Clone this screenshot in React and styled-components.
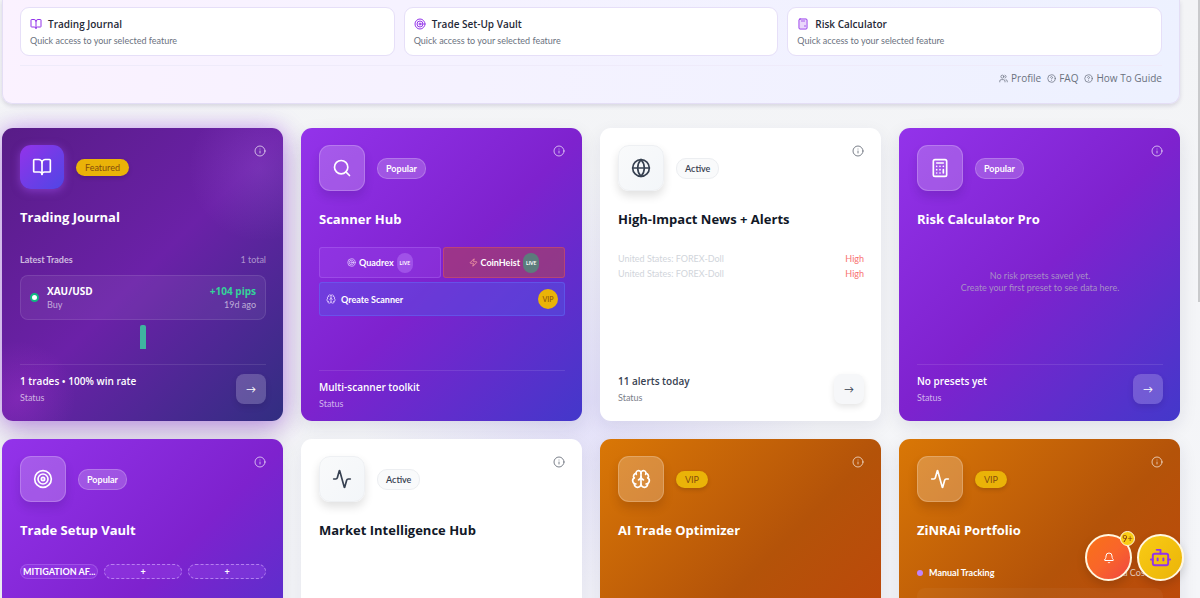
import React from 'react';
import styled, { createGlobalStyle, css } from 'styled-components';
import {
  Activity, Bell, BookOpen, Bot, Brain, Calculator, Globe, HelpCircle, Info, Search, Target, Users, Zap,
} from 'lucide-react';

const headingFont = '"Segoe UI", "Open Sans", "Noto Sans", sans-serif';

const GlobalStyle = createGlobalStyle`
  * {
    box-sizing: border-box;
  }
  body {
    margin: 0;
    font-family: "Segoe UI", Lato, "Open Sans", sans-serif;
    font-size: 9px;
    background: #f3f4f6;
  }
  button {
    font-family: inherit;
    cursor: pointer;
  }
  h2, p, ul {
    margin: 0;
    padding: 0;
  }
`;

const themes = {
  featured: {
    background: `radial-gradient(circle at 92% 14%, rgba(192, 132, 252, 0.16), transparent 20%),
      radial-gradient(circle at 6% 92%, rgba(217, 70, 239, 0.18), transparent 15%),
      linear-gradient(135deg, #581c87 0%, #6b21a8 50%, #312e81 100%)`,
    shadow: '0 0 22px rgba(168, 85, 247, 0.45), 0 12px 30px rgba(88, 28, 135, 0.3)',
    title: '#ffffff',
    status: '#ffffff',
    muted: 'rgba(255, 255, 255, 0.65)',
    line: 'rgba(255, 255, 255, 0.1)',
    tile: 'linear-gradient(135deg, #9333ea, #4f46e5)',
    tileBorder: 'transparent',
    tileShadow: '0 2px 8px rgba(168, 85, 247, 0.5)',
    arrow: 'rgba(255, 255, 255, 0.2)',
  },
  purple: {
    background: 'linear-gradient(135deg, #9333ea 0%, #7e22ce 50%, #4338ca 100%)',
    shadow: '0 6px 18px rgba(30, 27, 75, 0.1)',
    title: '#ffffff',
    status: '#ffffff',
    muted: 'rgba(255, 255, 255, 0.65)',
    line: 'rgba(255, 255, 255, 0.1)',
    tile: 'rgba(255, 255, 255, 0.2)',
    tileBorder: 'rgba(255, 255, 255, 0.2)',
    tileShadow: '0 6px 10px rgba(30, 10, 80, 0.14)',
    arrow: 'rgba(255, 255, 255, 0.2)',
  },
  white: {
    background: '#ffffff',
    shadow: '0 6px 18px rgba(30, 27, 75, 0.08)',
    title: '#111827',
    status: '#374151',
    muted: '#7b808a',
    line: 'transparent',
    tile: 'linear-gradient(135deg, #f9fafb, #f3f6f9)',
    tileBorder: '#eef0f3',
    tileShadow: '0 5px 10px rgba(0, 0, 0, 0.12)',
    arrow: '#f6f7f9',
  },
  amber: {
    background: 'linear-gradient(135deg, #d97706 0%, #b45309 50%, #c2410c 100%)',
    shadow: '0 6px 18px rgba(30, 27, 75, 0.1)',
    title: '#ffffff',
    status: '#ffffff',
    muted: 'rgba(255, 255, 255, 0.65)',
    line: 'rgba(255, 255, 255, 0.1)',
    tile: 'rgba(255, 255, 255, 0.22)',
    tileBorder: 'rgba(255, 255, 255, 0.2)',
    tileShadow: '0 6px 10px rgba(80, 30, 0, 0.18)',
    arrow: 'rgba(255, 255, 255, 0.2)',
  },
};

const Page = styled.div`
  height: 100vh;
  overflow: hidden;
  padding: 0 20px 0 2px;
  background:
    radial-gradient(circle at 590px 400px, rgba(199, 190, 250, 0.4), transparent 230px),
    linear-gradient(180deg, #f3f4f6, #f5f6f9);
`;

const Panel = styled.section`
  padding: 7px 17px 17px;
  border: 1px solid #e4def5;
  border-top: 0;
  border-radius: 0 0 10px 10px;
  background: linear-gradient(100deg, #fbf2ff 0%, #f5f2ff 40%, #edf1ff 100%);
  box-shadow: 0 2px 4px rgba(60, 50, 100, 0.16);
`;

const QuickGrid = styled.div`
  display: grid;
  grid-template-columns: repeat(3, 1fr);
  gap: 9px;
`;

const QuickCard = styled.button`
  display: block;
  padding: 8px 9px;
  text-align: left;
  color: #6b7280;
  background: #ffffff;
  border: 1px solid #e6dff8;
  border-radius: 9px;
`;

const QuickTitle = styled.span`
  display: flex;
  align-items: center;
  gap: 6px;
  height: 16px;
  font-family: ${headingFont};
  font-size: 10px;
  font-weight: 600;
  color: #1f2937;

  svg {
    color: #9333ea;
  }
`;

const QuickNote = styled.span`
  display: block;
  padding-top: 2px;
  font-size: 9px;
  line-height: 13px;
`;

const PanelLinks = styled.nav`
  display: flex;
  justify-content: flex-end;
  gap: 6px;
  margin-top: 9px;
  padding-top: 5px;
  border-top: 1px solid #efebfa;
`;

const PanelLink = styled.a`
  display: flex;
  align-items: center;
  gap: 3px;
  font-family: ${headingFont};
  font-size: 10px;
  line-height: 15px;
  color: #6b7280;
  text-decoration: none;
`;

const CardGrid = styled.main`
  display: grid;
  grid-template-columns: repeat(4, 1fr);
  grid-auto-rows: minmax(293px, auto);
  gap: 18px;
  margin-top: 24px;
`;

const Card = styled.article`
  display: flex;
  flex-direction: column;
  min-width: 0;
  padding: 17px 17px ${props => (props.$snug ? '10px' : '16px')} 18px;
  border-radius: 11px;
  color: ${props => props.$theme.title};
  background: ${props => props.$theme.background};
  box-shadow: ${props => props.$theme.shadow};
`;

const CardHead = styled.header`
  display: flex;
  align-items: center;
  gap: 12px;
`;

const IconTile = styled.div`
  display: flex;
  align-items: center;
  justify-content: center;
  width: ${props => (props.$small ? '44px' : '46px')};
  height: ${props => (props.$small ? '44px' : '46px')};
  border: 1px solid ${props => props.$theme.tileBorder};
  border-radius: 11px;
  color: ${props => props.$theme.status};
  background: ${props => props.$theme.tile};
  background-origin: border-box;
  box-shadow: ${props => props.$theme.tileShadow};
`;

const badgeLooks = {
  gold: css`
    padding: 0 9px;
    color: #854d0e;
    background: #eab308;
    border: 0;
    box-shadow: 0 2px 4px rgba(0, 0, 0, 0.15);
  `,
  glass: css`
    padding: 1px 8px;
    font-weight: 700;
    color: #ffffff;
    background: rgba(255, 255, 255, 0.2);
    border: 1px solid rgba(255, 255, 255, 0.2);
  `,
  plain: css`
    padding: 1px 8px;
    font-weight: 600;
    color: #374151;
    background: #f9fafb;
    border: 1px solid #eceef1;
  `,
};

const Badge = styled.span`
  font-size: 9px;
  line-height: 17px;
  border-radius: 10px;
  ${props => badgeLooks[props.$look]}
`;

const InfoButton = styled.button`
  display: flex;
  align-self: flex-start;
  margin-left: auto;
  padding: 0;
  border: 0;
  background: none;
  color: ${props => props.$theme.muted};
`;

const CardTitle = styled.h2`
  margin: 18px 0;
  font-family: ${headingFont};
  font-size: 13px;
  line-height: 20px;
  font-weight: 700;
`;

const CardFoot = styled.footer`
  display: flex;
  align-items: center;
  justify-content: space-between;
  margin-top: auto;
  padding-top: 8px;
  border-top: 1px solid ${props => props.$theme.line};
`;

const StatusValue = styled.p`
  font-family: ${headingFont};
  font-size: 10px;
  line-height: 16px;
  font-weight: 600;
  color: ${props => props.$theme.status};
`;

const StatusLabel = styled.p`
  padding-top: 2px;
  font-size: 9px;
  line-height: 14px;
  color: ${props => props.$theme.muted};
`;

const ArrowButton = styled.button`
  width: 30px;
  height: 30px;
  padding: 0;
  font-size: 10px;
  border: 0;
  border-radius: 8px;
  color: ${props => props.$theme.status};
  background: ${props => props.$theme.arrow};
  box-shadow: 0 3px 6px rgba(0, 0, 0, 0.1);
`;

const Between = styled.div`
  display: flex;
  align-items: center;
  justify-content: space-between;
`;

const TradesHead = styled(Between)`
  padding: 8px 0;
  line-height: 14px;
  font-weight: 700;
  font-size: 9px;
  color: rgba(255, 255, 255, 0.7);

  span:last-child {
    font-weight: 400;
    color: rgba(255, 255, 255, 0.5);
  }
`;

const TradeRow = styled.div`
  display: flex;
  align-items: center;
  gap: 8px;
  height: 45px;
  padding: 0 9px;
  border: 1px solid rgba(255, 255, 255, 0.1);
  border-radius: 8px;
  background: rgba(255, 255, 255, 0.06);
`;

const TradeDot = styled.span`
  width: 9px;
  height: 9px;
  border: 2px solid #10b981;
  border-radius: 50%;
  background: #ffffff;
`;

const TradeCell = styled.div`
  font-family: ${headingFont};
  font-size: 10px;
  line-height: 14px;
  font-weight: 700;
  color: ${props => (props.$gain ? '#34d399' : '#ffffff')};
  ${props => props.$gain && 'margin-left: auto; text-align: right;'}

  small {
    display: block;
    font-family: "Segoe UI", Lato, sans-serif;
    font-size: 9px;
    line-height: 13px;
    font-weight: 400;
    color: rgba(255, 255, 255, 0.6);
  }
`;

const WinChart = styled.svg`
  display: block;
  width: 6px;
  height: 24px;
  margin: 5px auto 0;
`;

const ScannerGrid = styled.div`
  display: grid;
  grid-template-columns: 1fr 1fr;
  gap: 4px 2px;
`;

const scannerLooks = {
  violet: css`
    background: rgba(168, 85, 247, 0.22);
    border-color: rgba(192, 132, 252, 0.3);
  `,
  red: css`
    background: rgba(185, 70, 70, 0.5);
    border-color: rgba(239, 90, 90, 0.4);
  `,
  blue: css`
    grid-column: 1 / -1;
    height: 34px;
    justify-content: flex-start;
    gap: 5px;
    padding: 0 6px;
    background: rgba(79, 91, 230, 0.4);
    border-color: rgba(99, 120, 255, 0.4);
  `,
};

const ScannerButton = styled.button`
  display: flex;
  align-items: center;
  justify-content: center;
  gap: 3px;
  height: 31px;
  padding: 0;
  font-size: 9px;
  font-weight: 700;
  color: #ffffff;
  border: 1px solid;
  border-radius: 3px;
  ${props => scannerLooks[props.$look]}

  svg {
    color: ${props => (props.$look === 'red' ? '#fca5a5' : '#e2ccff')};
  }
`;

const LiveTag = styled.span`
  padding: 0 3px;
  font-size: 5px;
  line-height: 20px;
  border-radius: 10px;
  background: ${props => (props.$green ? '#5c7c7c' : 'rgba(192, 132, 252, 0.4)')};
`;

const VipTag = styled.span`
  width: 20px;
  margin-left: auto;
  font-size: 7px;
  line-height: 20px;
  font-weight: 400;
  text-align: center;
  border-radius: 50%;
  color: #854d0e;
  background: #eab308;
`;

const NewsList = styled.ul`
  padding-top: 4px;
  list-style: none;
  line-height: 15px;
  font-size: 9px;
  color: #d1d5db;
`;

const Impact = styled.span`
  color: #f87171;
`;

const EmptyNote = styled.p`
  padding-top: 23px;
  font-size: 9px;
  line-height: 12px;
  text-align: center;
  color: #a78fc6;
`;

const SlotRow = styled.div`
  display: grid;
  grid-template-columns: repeat(3, minmax(0, 1fr));
  gap: 6px;
  padding-top: 6px;
`;

const Slot = styled.button`
  height: 15px;
  padding: 0 2px;
  overflow: hidden;
  font-size: 9px;
  line-height: 12px;
  font-weight: 700;
  text-align: center;
  white-space: nowrap;
  color: #ffffff;
  border: 1px ${props => (props.$empty ? 'dashed rgba(216, 180, 254, 0.6)' : 'solid rgba(216, 180, 254, 0.25)')};
  border-radius: 8px;
  background: rgba(168, 85, 247, 0.25);
`;

const Tracking = styled(Between)`
  padding: 8px 0;
  font-size: 9px;
  line-height: 14px;
  color: rgba(255, 255, 255, 0.75);
`;

const TrackingName = styled.span`
  display: flex;
  align-items: center;
  gap: 6px;
  font-weight: 700;
  color: #ffffff;

  &::before {
    content: '';
    width: 6px;
    height: 6px;
    border-radius: 50%;
    background: #c084fc;
  }
`;

const TrackingBox = styled.div`
  height: 46px;
  border-radius: 8px;
  background: rgba(255, 255, 255, 0.04);
`;

const Floating = styled.div`
  position: fixed;
  right: 16px;
  bottom: 17px;
  display: flex;
  gap: 5px;
`;

const RoundButton = styled.button`
  position: relative;
  display: flex;
  align-items: center;
  justify-content: center;
  width: 47px;
  height: 47px;
  padding: 0;
  border: 2px solid #fff7e0;
  border-radius: 50%;
  color: ${props => (props.$alert ? '#ffffff' : '#9333ea')};
  background: ${props => (props.$alert
    ? 'linear-gradient(135deg, #f97316, #f9652a 50%, #ef4444)'
    : 'linear-gradient(135deg, #facc15, #eab308)')};
  background-origin: border-box;
  box-shadow: 0 4px 10px rgba(0, 0, 0, 0.15);
`;

const Count = styled.span`
  position: absolute;
  top: -5px;
  right: -5px;
  width: 15px;
  height: 15px;
  font-size: 9px;
  line-height: 13px;
  text-align: center;
  color: #7c2d12;
  border: 1px solid #fff7e0;
  border-radius: 50%;
  background: #facc15;
`;

const ScrollThumb = styled.div`
  position: fixed;
  top: 0;
  right: 0;
  width: 2px;
  height: 302px;
  background: #c9cacc;
`;

const quickItems = [
  { label: 'Trading Journal', Icon: BookOpen },
  { label: 'Trade Set-Up Vault', Icon: Target },
  { label: 'Risk Calculator', Icon: Calculator },
];

const links = [
  { label: 'Profile', Icon: Users },
  { label: 'FAQ', Icon: HelpCircle },
  { label: 'How To Guide', Icon: HelpCircle },
];

const FeatureCard = ({
  look, title, Icon, badge, badgeLook, status, noArrow, children,
}) => {
  const theme = themes[look];
  const featured = look === 'featured';
  return (
    <Card $theme={theme} $snug={noArrow}>
      <CardHead>
        <IconTile $theme={theme} $small={featured}>
          <Icon size={20} />
        </IconTile>
        <Badge $look={badgeLook}>{badge}</Badge>
        <InfoButton $theme={theme} aria-label={`About ${title}`}>
          <Info size={12} />
        </InfoButton>
      </CardHead>
      <CardTitle>{title}</CardTitle>
      {children}
      {status && (
        <CardFoot $theme={theme}>
          <div>
            <StatusValue $theme={theme}>{status}</StatusValue>
            <StatusLabel $theme={theme}>Status</StatusLabel>
          </div>
          {!noArrow && <ArrowButton $theme={theme} aria-label={`Open ${title}`}>→</ArrowButton>}
        </CardFoot>
      )}
    </Card>
  );
};

const App = () => (
  <>
    <GlobalStyle />
    <Page>
      <Panel>
        <QuickGrid>
          {quickItems.map(({ label, Icon }) => (
            <QuickCard key={label}>
              <QuickTitle>
                <Icon size={12} />
                {label}
              </QuickTitle>
              <QuickNote>Quick access to your selected feature</QuickNote>
            </QuickCard>
          ))}
        </QuickGrid>
        <PanelLinks>
          {links.map(({ label, Icon }) => (
            <PanelLink key={label} href="#">
              <Icon size={9} />
              {label}
            </PanelLink>
          ))}
        </PanelLinks>
      </Panel>

      <CardGrid>
        <FeatureCard
          look="featured"
          title="Trading Journal"
          Icon={BookOpen}
          badge="Featured"
          badgeLook="gold"
          status="1 trades • 100% win rate"
        >
          <TradesHead>
            <span>Latest Trades</span>
            <span>1 total</span>
          </TradesHead>
          <TradeRow>
            <TradeDot />
            <TradeCell>
              XAU/USD
              <small>Buy</small>
            </TradeCell>
            <TradeCell $gain>
              +104 pips
              <small>19d ago</small>
            </TradeCell>
          </TradeRow>
          <WinChart viewBox="0 0 6 24">
            <path d="M0 24V2a2 2 0 0 1 2-2h2a2 2 0 0 1 2 2v22z" fill="#3fb3a0" />
          </WinChart>
        </FeatureCard>

        <FeatureCard
          look="purple"
          title="Scanner Hub"
          Icon={Search}
          badge="Popular"
          badgeLook="glass"
          status="Multi-scanner toolkit"
          noArrow
        >
          <ScannerGrid>
            <ScannerButton $look="violet">
              <Target size={9} />
              Quadrex
              <LiveTag>LIVE</LiveTag>
            </ScannerButton>
            <ScannerButton $look="red">
              <Zap size={9} />
              CoinHeist
              <LiveTag $green>LIVE</LiveTag>
            </ScannerButton>
            <ScannerButton $look="blue">
              <Brain size={10} />
              Qreate Scanner
              <VipTag>VIP</VipTag>
            </ScannerButton>
          </ScannerGrid>
        </FeatureCard>

        <FeatureCard
          look="white"
          title="High-Impact News + Alerts"
          Icon={Globe}
          badge="Active"
          badgeLook="plain"
          status="11 alerts today"
        >
          <NewsList>
            {[1, 2].map(id => (
              <Between as="li" key={id}>
                <span>United States: FOREX-Doll</span>
                <Impact>High</Impact>
              </Between>
            ))}
          </NewsList>
        </FeatureCard>

        <FeatureCard
          look="purple"
          title="Risk Calculator Pro"
          Icon={Calculator}
          badge="Popular"
          badgeLook="glass"
          status="No presets yet"
        >
          <EmptyNote>
            No risk presets saved yet.
            <br />
            Create your first preset to see data here.
          </EmptyNote>
        </FeatureCard>

        <FeatureCard look="purple" title="Trade Setup Vault" Icon={Target} badge="Popular" badgeLook="glass">
          <SlotRow>
            <Slot>MITIGATION AF...</Slot>
            <Slot $empty>+</Slot>
            <Slot $empty>+</Slot>
          </SlotRow>
        </FeatureCard>

        <FeatureCard look="white" title="Market Intelligence Hub" Icon={Activity} badge="Active" badgeLook="plain" />

        <FeatureCard look="amber" title="AI Trade Optimizer" Icon={Brain} badge="VIP" badgeLook="gold" />

        <FeatureCard look="amber" title="ZiNRAi Portfolio" Icon={Activity} badge="VIP" badgeLook="gold">
          <Tracking>
            <TrackingName>Manual Tracking</TrackingName>
            <span>Fixed Cost: $0</span>
          </Tracking>
          <TrackingBox />
        </FeatureCard>
      </CardGrid>
    </Page>

    <Floating>
      <RoundButton $alert aria-label="Notifications">
        <Bell size={12} />
        <Count>9+</Count>
      </RoundButton>
      <RoundButton aria-label="Assistant">
        <Bot size={23} />
      </RoundButton>
    </Floating>
    <ScrollThumb />
  </>
);

export default App;
